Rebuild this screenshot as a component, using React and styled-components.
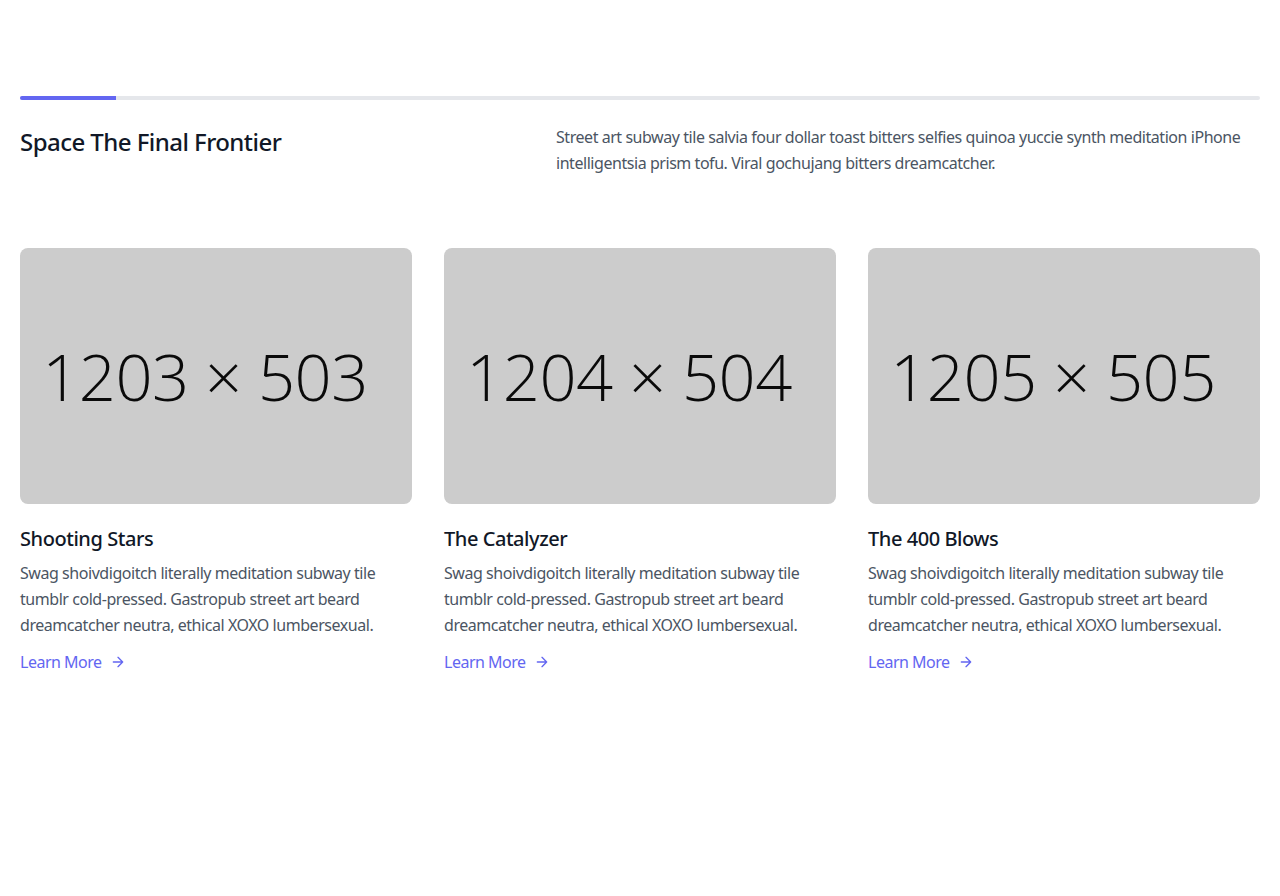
import React from "react";
import styled, { createGlobalStyle } from "styled-components";

const GlobalStyle = createGlobalStyle`
  body {
    margin: 0;
    background: #fff;
    font-family: "Noto Sans", "Open Sans", sans-serif;
    -webkit-font-smoothing: antialiased;
  }
  * {
    box-sizing: border-box;
  }
`;

const Section = styled.section`
  padding: 96px 0;
`;

const Container = styled.div`
  padding: 0 20px;
`;

const Track = styled.div`
  height: 4px;
  border-radius: 2px;
  background: #e5e7eb;
  overflow: hidden;
`;

const Progress = styled.div`
  width: 96px;
  height: 100%;
  background: #6366f1;
`;

const Intro = styled.div`
  display: flex;
  padding: 24px 0;
  margin-bottom: 48px;
`;

const Heading = styled.h1`
  width: 40%;
  margin: 2px 0 0;
  font-size: 24px;
  line-height: 32px;
  font-weight: 500;
  letter-spacing: -0.55px;
  color: #111827;
`;

const Lead = styled.p`
  width: 60%;
  margin: 0;
  padding-left: 40px;
  font-size: 16px;
  line-height: 26px;
  letter-spacing: -0.45px;
  color: #4b5563;
`;

const Grid = styled.div`
  display: grid;
  grid-template-columns: repeat(3, 1fr);
  gap: 32px;
`;

const Card = styled.div`
  display: flex;
  flex-direction: column;
  align-items: flex-start;
`;

const Placeholder = styled.div`
  width: 100%;
  height: 256px;
  border-radius: 8px;
  background: #cccccc;
  display: flex;
  align-items: center;
  justify-content: center;
  padding-right: 22px;
  font-family: "Open Sans", sans-serif;
  font-size: 65px;
  font-weight: 300;
  letter-spacing: -0.5px;
  color: #0a0a0a;
  overflow: hidden;
  white-space: nowrap;
`;

const Title = styled.h2`
  margin: 21px 0 0;
  font-size: 20px;
  line-height: 28px;
  font-weight: 500;
  letter-spacing: -0.45px;
  color: #111827;
`;

const Text = styled.p`
  margin: 7px 0 0;
  font-size: 16px;
  line-height: 26px;
  letter-spacing: -0.45px;
  color: #4b5563;
`;

const More = styled.a`
  margin-top: 12px;
  display: inline-flex;
  align-items: center;
  font-size: 16px;
  line-height: 24px;
  letter-spacing: -0.5px;
  color: #6366f1;
  text-decoration: none;
  cursor: pointer;

  svg {
    margin-left: 8px;
  }
`;

const cards = [
  { title: "Shooting Stars", size: "1203 × 503" },
  { title: "The Catalyzer", size: "1204 × 504" },
  { title: "The 400 Blows", size: "1205 × 505" },
];

const desc =
  "Swag shoivdigoitch literally meditation subway tile tumblr cold-pressed. Gastropub street art beard dreamcatcher neutra, ethical XOXO lumbersexual.";

const Arrow = () => (
  <svg
    width="16"
    height="16"
    viewBox="0 0 24 24"
    fill="none"
    stroke="currentColor"
    strokeWidth="2"
    strokeLinecap="round"
    strokeLinejoin="round"
  >
    <path d="M5 12h14M12 5l7 7-7 7" />
  </svg>
);

const App = () => {
  return (
    <Section>
      <GlobalStyle />
      <Container>
        <Track>
          <Progress />
        </Track>
        <Intro>
          <Heading>Space The Final Frontier</Heading>
          <Lead>
            Street art subway tile salvia four dollar toast bitters selfies
            quinoa yuccie synth meditation iPhone intelligentsia prism tofu.
            Viral gochujang bitters dreamcatcher.
          </Lead>
        </Intro>
        <Grid>
          {cards.map((card) => (
            <Card key={card.title}>
              <Placeholder>{card.size}</Placeholder>
              <Title>{card.title}</Title>
              <Text>{desc}</Text>
              <More>
                Learn More
                <Arrow />
              </More>
            </Card>
          ))}
        </Grid>
      </Container>
    </Section>
  );
};

export default App;
